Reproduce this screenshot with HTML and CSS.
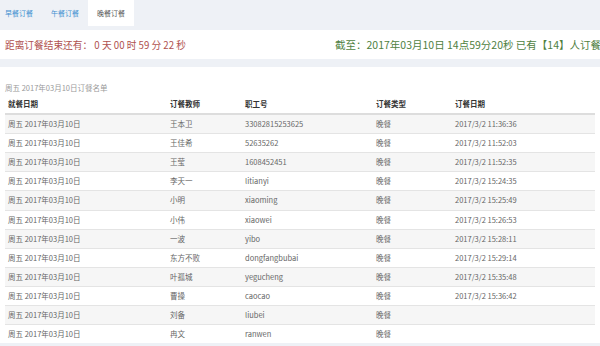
FILE: index.html
```html
<!DOCTYPE html>
<html lang="zh-CN">
<head>
    <meta charset="UTF-8">
    <meta name="viewport" content="width=device-width, initial-scale=1.0">
    <title>订餐名单</title>
    <link rel="stylesheet" href="styles.css">
</head>
<body>
    <!-- Tabs -->
    <ul class="tabs">
        <li class="tab">早餐订餐</li>
        <li class="tab">午餐订餐</li>
        <li class="tab active">晚餐订餐</li>
    </ul>

    <!-- Countdown -->
    <div class="status">
        <div class="status-row">
            <span class="countdown">距离订餐结束还有： 0 天 00 时 59 分 22 秒</span>
            <span class="total">截至：2017年03月10日 14点59分20秒 已有【14】人订餐</span>
        </div>
    </div>

    <!-- List -->
    <div class="panel">
        <p class="caption">周五 2017年03月10日订餐名单</p>
        <table class="orders">
            <colgroup>
                <col class="c-date">
                <col class="c-name">
                <col class="c-id">
                <col class="c-type">
                <col class="c-time">
            </colgroup>
            <thead>
                <tr>
                    <th>就餐日期</th>
                    <th>订餐教师</th>
                    <th>职工号</th>
                    <th>订餐类型</th>
                    <th>订餐日期</th>
                </tr>
            </thead>
            <tbody>
                <tr><td>周五 2017年03月10日</td><td>王本卫</td><td>33082815253625</td><td>晚餐</td><td>2017/3/2 11:36:36</td></tr>
                <tr><td>周五 2017年03月10日</td><td>王佳希</td><td>52635262</td><td>晚餐</td><td>2017/3/2 11:52:03</td></tr>
                <tr><td>周五 2017年03月10日</td><td>王莹</td><td>1608452451</td><td>晚餐</td><td>2017/3/2 11:52:35</td></tr>
                <tr><td>周五 2017年03月10日</td><td>李天一</td><td>litianyi</td><td>晚餐</td><td>2017/3/2 15:24:35</td></tr>
                <tr><td>周五 2017年03月10日</td><td>小明</td><td>xiaoming</td><td>晚餐</td><td>2017/3/2 15:25:49</td></tr>
                <tr><td>周五 2017年03月10日</td><td>小伟</td><td>xiaowei</td><td>晚餐</td><td>2017/3/2 15:26:53</td></tr>
                <tr><td>周五 2017年03月10日</td><td>一波</td><td>yibo</td><td>晚餐</td><td>2017/3/2 15:28:11</td></tr>
                <tr><td>周五 2017年03月10日</td><td>东方不败</td><td>dongfangbubai</td><td>晚餐</td><td>2017/3/2 15:29:14</td></tr>
                <tr><td>周五 2017年03月10日</td><td>叶孤城</td><td>yegucheng</td><td>晚餐</td><td>2017/3/2 15:35:48</td></tr>
                <tr><td>周五 2017年03月10日</td><td>曹操</td><td>caocao</td><td>晚餐</td><td>2017/3/2 15:36:42</td></tr>
                <tr><td>周五 2017年03月10日</td><td>刘备</td><td>liubei</td><td>晚餐</td><td></td></tr>
                <tr><td>周五 2017年03月10日</td><td>冉文</td><td>ranwen</td><td>晚餐</td><td></td></tr>
            </tbody>
        </table>
    </div>
</body>
</html>
```

FILE: styles.css
```css
body {
    margin: 0;
    background-color: #eef1f6;
    font-family: "Noto Sans CJK SC", "Noto Sans", sans-serif;
    color: #666;
    overflow: hidden;
}

/* tabs */
.tabs {
    display: flex;
    list-style: none;
    margin: 0;
    padding: 0;
    height: 26px;
}

.tab {
    padding: 0 9px;
    line-height: 26px;
    font-size: 7px;
    color: #3d8fd0;
}

.tab:first-child {
    padding-left: 5px;
}

.tab.active {
    background-color: #fff;
    color: #555;
}

/* countdown bar */
.status {
    margin-top: 4px;
    background-color: #fff;
    overflow: hidden;
}

.status-row {
    display: flex;
    align-items: center;
    width: 606px; /* last word runs past the window, as in the original */
    height: 29px;
    padding: 0 5px;
    box-sizing: border-box;
    white-space: nowrap;
}

.countdown {
    font-size: 9.7px;
    color: #b0524f;
}

.total {
    margin-left: auto;
    font-size: 10.5px;
    color: #4f7f3f;
}

/* list panel */
.panel {
    margin-top: 8px;
    background-color: #fff;
    padding: 16px 5px 0;
}

.caption {
    margin: 0 0 2px;
    font-size: 7.5px;
    line-height: 10px;
    color: #999;
}

.orders {
    width: 100%;
    border-collapse: collapse;
    font-size: 7.5px;
}

.c-date { width: 162px; }
.c-name { width: 75px; }
.c-id { width: 131px; }
.c-type { width: 79px; }

.orders th,
.orders td {
    padding: 4px 3px;
    line-height: 10.1px;
    text-align: left;
    white-space: nowrap;
}

.orders th {
    color: #333;
    font-weight: bold;
    border-bottom: 2px solid #ddd;
}

.orders td {
    border-top: 1px solid #e4e4e4;
}

.orders tbody tr:nth-child(odd) {
    background-color: #f6f6f6;
}
```
